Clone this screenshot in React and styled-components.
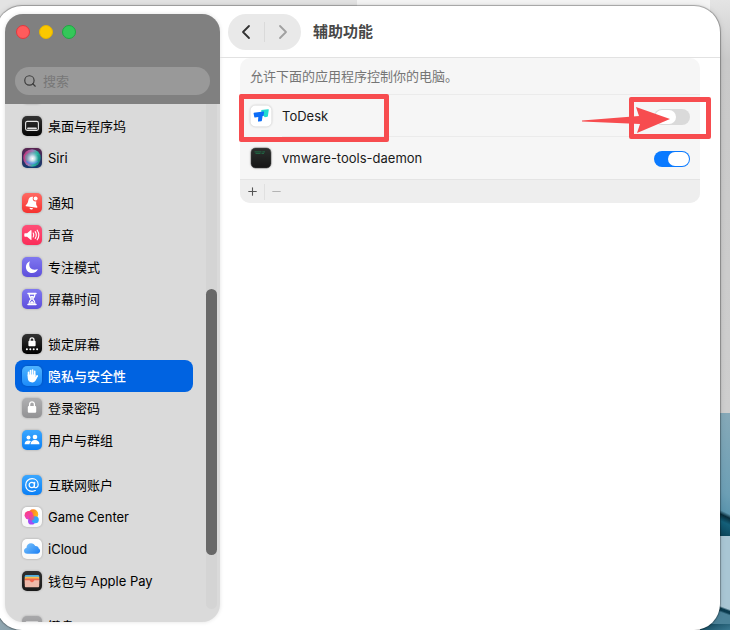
import React, { useState } from 'react'
import styled, { createGlobalStyle } from 'styled-components'
import { LuChevronLeft, LuChevronRight, LuSearch, LuPlus, LuMinus } from 'react-icons/lu'

const GlobalStyle = createGlobalStyle`
  * {
    box-sizing: border-box;
  }
  body {
    margin: 0;
    overflow: hidden;
    font-family: Inter, "Noto Sans CJK SC", sans-serif;
    font-size: 13px;
    line-height: 20px;
    color: #1a1a1a;
  }
  button, input {
    font: inherit;
    margin: 0;
  }
`

function Tile({ id, from, to, children }) {
  return (
    <IconSvg viewBox="0 0 20 20" aria-hidden="true">
      <defs>
        <linearGradient id={id} x1="0" y1="0" x2="0" y2="1">
          <stop offset="0" stopColor={from} />
          <stop offset="1" stopColor={to} />
        </linearGradient>
      </defs>
      <rect width="20" height="20" rx="5" fill={`url(#${id})`} />
      {children}
    </IconSvg>
  )
}

const ControlIcon = () => (
  <Tile id="control" from="#a8a8aa" to="#8e8e90">
    <rect x="4" y="5" width="12" height="4" rx="2" fill="none" stroke="#fff" />
    <rect x="4" y="11" width="12" height="4" rx="2" fill="#fff" />
  </Tile>
)

const DockIcon = () => (
  <Tile id="dock" from="#333" to="#050505">
    <rect x="3.6" y="5.4" width="12.8" height="9" rx="1.6" fill="none" stroke="#e4e4e4" strokeWidth="1.1" />
    <rect x="5.200" y="11.600" width="9.600" height="1.700" rx="0.6" fill="#e4e4e4" />
  </Tile>
)

const SiriIcon = () => (
  <Tile id="siri" from="#5a2450" to="#123a6e">
    <defs>
      <radialGradient id="siriGlow" cx="0.5" cy="0.5" r="0.5">
        <stop offset="0" stopColor="#fff" />
        <stop offset="0.4" stopColor="#dcebf5" stopOpacity="0.85" />
        <stop offset="1" stopColor="#9ac8dc" stopOpacity="0" />
      </radialGradient>
      <linearGradient id="siriBall" x1="0" y1="0.3" x2="1" y2="0.6">
        <stop offset="0" stopColor="#c42d78" />
        <stop offset="0.45" stopColor="#9a80b8" />
        <stop offset="0.7" stopColor="#2bb5a0" />
        <stop offset="1" stopColor="#147c80" />
      </linearGradient>
    </defs>
    <circle cx="10" cy="10" r="8.8" fill="url(#siriBall)" />
    <path d="M3 8c4-5 10-5 14-1-4-1-9 0-11 8-2-2-3-4-3-7z" fill="#3fd0b5" opacity="0.4" />
    <path d="M3.500 13c3 4 9 5 13 0-4 1-8 1-13 0z" fill="#4a7cf0" opacity="0.7" />
    <circle cx="10.500" cy="10.500" r="6.200" fill="url(#siriGlow)" />
  </Tile>
)

const BellIcon = () => (
  <Tile id="bell" from="#ff6a63" to="#f5322f">
    <g transform="rotate(8 10 10)">
      <path d="M10 3.800c-2.700 0-4 2-4 4.300 0 2.500-.7 3.600-1.700 4.700-.5.600-.2 1.300.5 1.300h10.400c.7 0 1-.7.500-1.300C14.700 11.700 14 10.600 14 8.100c0-2.300-1.300-4.300-4-4.300z" fill="#fff" />
      <path d="M8.200 15h3.600c-.2 1-.9 1.500-1.800 1.500S8.400 16 8.200 15z" fill="#fff" />
    </g>
    <circle cx="13.600" cy="5.600" r="2.900" fill="#fb5750" />
    <circle cx="13.600" cy="5.600" r="2" fill="#fff" />
  </Tile>
)

const SoundIcon = () => (
  <Tile id="sound" from="#ff4f78" to="#fb2d58">
    <path d="M3 8.200h2.100l3.500-3c.4-.3.900-.1.900.4v8.800c0 .5-.5.700-.9.400l-3.500-3H3c-.4 0-.7-.3-.7-.7V8.900c0-.4.300-.7.700-.7z" fill="#fff" />
    <path d="M11.200 8c.7 1.200.7 2.800 0 4M13.200 6.600c1.300 2 1.300 4.800 0 6.800M15.200 5.200c1.900 2.800 1.900 6.800 0 9.600" fill="none" stroke="#fff" strokeWidth="1.100" strokeLinecap="round" />
  </Tile>
)

const MoonIcon = () => (
  <Tile id="moon" from="#8078f0" to="#5d4fdc">
    <path d="M8 4.300c-2.600 1-4.100 3.200-4.100 5.800 0 3.400 2.700 6 6.100 6 2.700 0 5-1.600 5.900-4.100-3.200 1.200-6.100.7-7.700-1.300C6.900 9 6.900 6.700 8 4.300z" fill="#fff" />
  </Tile>
)

const HourglassIcon = () => (
  <Tile id="hourglass" from="#8078f0" to="#5d4fdc">
    <path d="M6 4.400h8M6 15.600h8" stroke="#fff" strokeWidth="1.500" strokeLinecap="round" />
    <path d="M7 5c0 2.500.8 3.600 2.300 5C7.800 11.400 7 12.500 7 15h6c0-2.500-.8-3.600-2.300-5C12.200 8.600 13 7.500 13 5z" fill="none" stroke="#fff" strokeWidth="1.200" />
    <path d="M8 7h4l-2 2.600zM7.800 14.600c.3-1.400 1.200-2 2.200-2.600 1 .6 1.900 1.200 2.200 2.600z" fill="#fff" />
  </Tile>
)

const LockScreenIcon = () => (
  <Tile id="lockScreen" from="#333" to="#000">
    <path d="M8 7.400V5.900c0-2.800 4-2.800 4 0v1.500" fill="none" stroke="#fff" strokeWidth="1.300" />
    <rect x="6.400" y="6.800" width="7.200" height="5.400" rx="1" fill="#fff" />
    <g fill="#fff">
      <circle cx="4.900" cy="15.200" r="1" />
      <circle cx="8.300" cy="15.200" r="1" />
      <circle cx="11.700" cy="15.200" r="1" />
      <circle cx="15.100" cy="15.200" r="1" />
    </g>
  </Tile>
)

const HandIcon = () => (
  <Tile id="hand" from="#4db3ff" to="#1c8bfa">
    <g fill="none" stroke="#fff" strokeWidth="1.600" strokeLinecap="round">
      <path d="M6.500 10V6.200M8.500 9V4.500M10.600 9V4M12.700 9.500V5.200M13.200 12.600l2-2.800" />
    </g>
    <path d="M5.700 8.500h7.800v2.600l1.400-1.600 1 .8-2 3.700c-.7 1.500-1.900 2.400-3.600 2.400-2.800 0-4.600-1.700-4.600-4.600z" fill="#fff" />
  </Tile>
)

const PadlockIcon = () => (
  <Tile id="padlock" from="#b0b0b2" to="#929294">
    <path d="M7.600 9V6.400c0-3.300 4.800-3.300 4.800 0V9" fill="none" stroke="#fff" strokeWidth="1.300" />
    <rect x="5.800" y="8" width="8.400" height="6.800" rx="1.100" fill="#fff" />
  </Tile>
)

const PeopleIcon = () => (
  <Tile id="people" from="#3ba7ff" to="#0a7ff5">
    <g fill="#fff">
      <circle cx="6.500" cy="7.400" r="2" />
      <path d="M2.600 14.300c0-2.300 1.500-3.900 3.900-3.900 1 0 1.900.3 2.500.8-1 .9-1.500 2-1.500 3.100z" />
      <circle cx="13" cy="7" r="2.300" />
      <path d="M8.500 14.300c0-2.600 1.800-4.200 4.500-4.200s4.500 1.600 4.500 4.200z" />
    </g>
  </Tile>
)

const AtIcon = () => (
  <Tile id="at" from="#3ba7ff" to="#0a7ff5">
    <g fill="none" stroke="#fff" strokeWidth="1.200" strokeLinecap="round">
      <circle cx="9.800" cy="10" r="2.700" />
      <path d="M12.700 7.300l-.4 4c-.1 2.300 3.900 1.900 3.900-1.600 0-3.600-2.600-6-6.100-6-3.700 0-6.400 2.700-6.400 6.400 0 3.600 2.600 6.200 6.400 6.200 1.200 0 2.300-.2 3.200-.7" />
    </g>
  </Tile>
)

const GameIcon = () => (
  <Tile id="game" from="#fff" to="#f6f6f6">
    <defs>
      <linearGradient id="gameWarm" x1="0" y1="0" x2="1" y2="0.300">
        <stop offset="0" stopColor="#ff5a4d" />
        <stop offset="0.500" stopColor="#ff8a1f" />
        <stop offset="1" stopColor="#ffb61a" />
      </linearGradient>
      <linearGradient id="gamePink" x1="0" y1="0" x2="0.600" y2="1">
        <stop offset="0" stopColor="#ff3f6e" />
        <stop offset="1" stopColor="#e83fd0" />
      </linearGradient>
    </defs>
    <circle cx="11.200" cy="7.200" r="5" fill="url(#gameWarm)" />
    <circle cx="6.800" cy="8.200" r="4.200" fill="url(#gamePink)" />
    <circle cx="9.600" cy="14" r="3.600" fill="#a24bf5" />
    <circle cx="13.300" cy="12.800" r="3.500" fill="#32a6fb" />
    <circle cx="9.600" cy="10.400" r="2.800" fill="#f34a7a" opacity="0.700" />
  </Tile>
)

const CloudIcon = () => (
  <Tile id="cloudTile" from="#fff" to="#f7f7f7">
    <defs>
      <linearGradient id="cloud" x1="0" y1="0" x2="1" y2="0.800">
        <stop offset="0" stopColor="#7cc4fb" />
        <stop offset="1" stopColor="#2485f5" />
      </linearGradient>
    </defs>
    <path d="M5.300 14.800c-2 0-3.300-1.300-3.300-3 0-1.500 1-2.600 2.400-2.900C4.600 6.200 6.500 4.200 9 4.200c1.900 0 3.500 1.200 4.300 2.900 2.100-.2 3.300 1 3.400 2.500.9.400 1.400 1.200 1.400 2.200 0 1.600-1.200 3-3 3z" fill="url(#cloud)" />
  </Tile>
)

const WalletIcon = () => (
  <Tile id="wallet" from="#303030" to="#191919">
    <rect x="2.800" y="4" width="14.400" height="5" rx="1.300" fill="#4caee3" />
    <rect x="2.800" y="5.700" width="14.400" height="5" rx="1" fill="#f7bd4a" />
    <rect x="2.800" y="7.400" width="14.400" height="6" rx="1" fill="#f0654f" />
    <path d="M2.800 9.200h4.500c.9 0 .9 2 2.700 2s1.800-2 2.700-2h4.500V15c0 .8-.5 1.300-1.300 1.300H4.100c-.8 0-1.300-.5-1.300-1.300z" fill="#eeb9a9" />
  </Tile>
)

const KeyboardIcon = () => (
  <Tile id="keyboard" from="#a8a8aa" to="#8e8e90">
    <rect x="3" y="5.500" width="14" height="9" rx="1.500" fill="#fff" />
  </Tile>
)

const ToDeskIcon = () => (
  <IconSvg $size={22} viewBox="0 0 22 22" aria-hidden="true">
    <rect x="0.500" y="0.500" width="21" height="21" rx="5" fill="#fff" />
    <path d="M11.300 5.100l6.800-.9c.5-.1.700.1.700.6l-.9 6.200c-.1.400-.2.600-.6.700l-2.500.5-3.500-3.600z" fill="#1fdbd0" />
    <path d="M3.700 7.800l9.800-1.300c.5-.1.700.1.600.6l-.5 3.300c-.1.400-.3.500-.6.600l-.4.100-.7 4.500c-.1.400-.3.500-.6.600l-2.700.4c-.4.100-.6-.1-.6-.5l.3-4-3.300.4c-.4 0-.6-.1-.7-.5l-.7-3.600c-.1-.3.100-.5.400-.6z" fill="#0b6cf7" />
  </IconSvg>
)

const DaemonIcon = () => (
  <IconSvg $size={22} viewBox="0 0 22 22" aria-hidden="true">
    <defs>
      <linearGradient id="daemon" x1="0" y1="0" x2="0" y2="1">
        <stop offset="0" stopColor="#2c302e" />
        <stop offset="1" stopColor="#151515" />
      </linearGradient>
    </defs>
    <rect x="1" y="1" width="20" height="20" rx="4.500" fill="url(#daemon)" stroke="#4a4a4a" strokeWidth="0.500" />
    <path d="M4.500 4.900h7M12.300 4.900H15M5.500 6.400h5M11.500 6.400h2.500" stroke="#1f7a4c" strokeWidth="0.800" />
  </IconSvg>
)

const groups = [
  [
    { name: '桌面与程序坞', icon: <DockIcon /> },
    { name: 'Siri', icon: <SiriIcon /> },
  ],
  [
    { name: '通知', icon: <BellIcon /> },
    { name: '声音', icon: <SoundIcon /> },
    { name: '专注模式', icon: <MoonIcon /> },
    { name: '屏幕时间', icon: <HourglassIcon /> },
  ],
  [
    { name: '锁定屏幕', icon: <LockScreenIcon /> },
    { name: '隐私与安全性', icon: <HandIcon />, active: true },
    { name: '登录密码', icon: <PadlockIcon /> },
    { name: '用户与群组', icon: <PeopleIcon /> },
  ],
  [
    { name: '互联网账户', icon: <AtIcon /> },
    { name: 'Game Center', icon: <GameIcon /> },
    { name: 'iCloud', icon: <CloudIcon /> },
    { name: '钱包与 Apple Pay', icon: <WalletIcon /> },
  ],
  [{ name: '键盘', icon: <KeyboardIcon /> }],
]

function Sidebar() {
  return (
    <SidebarPanel>
      <SidebarHeader>
        <Lights>
          <Light $color="#ff5b5c" $edge="#e0383e" aria-label="关闭" />
          <Light $color="#fac800" $edge="#e5b400" aria-label="最小化" />
          <Light $color="#34c759" $edge="#1fa743" aria-label="缩放" />
        </Lights>
        <SearchBox>
          <LuSearch size={14} strokeWidth={2} />
          <SearchInput type="search" placeholder="搜索" aria-label="搜索" />
        </SearchBox>
      </SidebarHeader>
      <SidebarBody>
        <Nav>
          {/* scrolled so that only the foot of this row shows */}
          <ScrolledItem href="#" aria-label="控制中心">
            <ControlIcon />
          </ScrolledItem>
          {groups.map((items) => (
            <NavGroup key={items[0].name}>
              {items.map((item) => (
                <NavItem key={item.name} href="#" $active={item.active}>
                  {item.icon}
                  {item.name}
                </NavItem>
              ))}
            </NavGroup>
          ))}
        </Nav>
        <Track>
          <Thumb />
        </Track>
      </SidebarBody>
    </SidebarPanel>
  )
}

function AppRow({ id, icon, name, defaultOn, children }) {
  const [on, setOn] = useState(defaultOn)

  return (
    <Row>
      {icon}
      <RowBody>
        <label htmlFor={id}>{name}</label>
        <Switch id={id} type="checkbox" checked={on} onChange={() => setOn(!on)} />
      </RowBody>
      {children}
    </Row>
  )
}

function App() {
  return (
    <>
      <GlobalStyle />
      <Desktop>
        <Window>
          <Sidebar />
          <Content>
            <Toolbar>
              <NavButtons>
                <NavButton aria-label="后退">
                  <LuChevronLeft size={24} strokeWidth={1.8} />
                </NavButton>
                <NavButton aria-label="前进" disabled>
                  <LuChevronRight size={24} strokeWidth={1.8} />
                </NavButton>
              </NavButtons>
              <Title>辅助功能</Title>
            </Toolbar>
            <Card>
              <Note>允许下面的应用程序控制你的电脑。</Note>
              <AppRow id="todesk" icon={<ToDeskIcon />} name="ToDesk" defaultOn={false}>
                <NameMark />
                <SwitchMark />
                <Arrow viewBox="0 0 88 26" aria-hidden="true">
                  <path d="M0 13.500 57 9 54 0 88 12 55 26 58 17 0 14.500z" fill="#f74c4f" />
                </Arrow>
              </AppRow>
              <AppRow id="vmware" icon={<DaemonIcon />} name="vmware-tools-daemon" defaultOn />
              <CardFooter>
                <FooterButton aria-label="添加">
                  <LuPlus size={13} />
                </FooterButton>
                <FooterButton aria-label="移除" disabled>
                  <LuMinus size={13} />
                </FooterButton>
              </CardFooter>
            </Card>
          </Content>
        </Window>
      </Desktop>
    </>
  )
}

export default App

const IconSvg = styled.svg`
  flex: none;
  width: ${({ $size }) => $size || 20}px;
  height: ${({ $size }) => $size || 20}px;
  filter: drop-shadow(0 0 1px rgba(0, 0, 0, 0.25));
`

const Desktop = styled.div`
  display: flex;
  height: 100vh;
  padding: 6px 10px 0 0;
  background:
    linear-gradient(160deg, #0e4358, #3a7890) right bottom / 30px 6px no-repeat,
    linear-gradient(200deg, #a9c6d4 0 70%, #0b3b4e 72% 74%, #4b8298 76%) right bottom / 30px 94px no-repeat,
    linear-gradient(205deg, #86a9b8 0%, #6c9fb5 60%, #5b95ad 74%, #082c3a 77%, #14607a 82%, #063142 100%) right 413px / 30px 123px no-repeat,
    linear-gradient(#e4e4e4, #c9c9c9 60px, #cecece 413px) right top / 20px 413px no-repeat,
    linear-gradient(#a8b8c1, #8fa6b1) left bottom / 40px 40px no-repeat,
    linear-gradient(90deg, #e3e3e3 357px, #f4f4f4 357px);
`

/* the window hangs a little over the left edge of the screen */
const Window = styled.div`
  flex: 1;
  display: flex;
  min-width: 0;
  margin-left: -4px;
  padding: 8px 0 8px 9px;
  border-radius: 26px;
  background: #fff;
  box-shadow: 0 0 1px 1px rgba(0, 0, 0, 0.3), 0 0 6px rgba(0, 0, 0, 0.12);
`

const SidebarPanel = styled.aside`
  flex: none;
  display: flex;
  flex-direction: column;
  width: 215px;
  overflow: hidden;
  border-radius: 18px;
  background: #dadada;
  box-shadow: 0 0 4px rgba(0, 0, 0, 0.12);
`

const SidebarHeader = styled.div`
  flex: none;
  padding: 11px 10px 9px;
  background: #808080;
`

const Lights = styled.div`
  display: flex;
  gap: 9px;
  padding-left: 1px;
  margin-bottom: 28px;
`

const Light = styled.button`
  width: 14px;
  height: 14px;
  padding: 0;
  border: 1px solid ${({ $edge }) => $edge};
  border-radius: 50%;
  background: ${({ $color }) => $color};
`

const SearchBox = styled.div`
  display: flex;
  align-items: center;
  gap: 6px;
  height: 28px;
  padding: 0 8px;
  border-radius: 14px;
  background: #999;
  color: #3c3c3c;
`

const SearchInput = styled.input`
  flex: 1;
  min-width: 0;
  padding: 0;
  border: 0;
  outline: 0;
  background: none;
  &::placeholder {
    color: #777;
  }
`

const SidebarBody = styled.div`
  flex: 1;
  display: flex;
  min-height: 0;
  padding: 0 3px 0 10px;
  gap: 13px;
`

const Nav = styled.nav`
  flex: 1;
  overflow: hidden;
`

const NavGroup = styled.div`
  margin-bottom: 13px;
`

const NavItem = styled.a`
  display: flex;
  align-items: center;
  gap: 6px;
  height: 32px;
  padding: 0 7px;
  border-radius: 8px;
  font-weight: ${({ $active }) => ($active ? 500 : 400)};
  white-space: nowrap;
  text-decoration: none;
  color: ${({ $active }) => ($active ? '#fff' : '#000')};
  background: ${({ $active }) => ($active ? '#0063e1' : 'none')};
`

const ScrolledItem = styled(NavItem)`
  margin-top: -26px;
`

const Track = styled.div`
  flex: none;
  width: 11px;
  margin-bottom: 13px;
  padding-top: 185px;
  border-radius: 0 0 6px 6px;
  background: #d4d4d4;
`

const Thumb = styled.div`
  height: 266px;
  border-radius: 6px;
  background: #686868;
`

const Content = styled.main`
  flex: 1;
  min-width: 0;
`

const Toolbar = styled.header`
  display: flex;
  gap: 12px;
  height: 44px;
  padding-left: 8px;
  border-bottom: 1px solid #e2e2e2;
`

const NavButtons = styled.div`
  display: flex;
  align-items: center;
  width: 73px;
  height: 36px;
  border-radius: 18px;
  background: #e9e9e9;
`

const NavButton = styled.button`
  flex: 1;
  display: flex;
  align-items: center;
  justify-content: center;
  height: 20px;
  padding: 0;
  border: 0;
  background: none;
  color: #333;
  & + & {
    border-left: 1px solid #dadada;
  }
  &:disabled {
    color: #a0a0a0;
  }
`

const Title = styled.h1`
  margin: 0;
  font-size: 15px;
  line-height: 36px;
  font-weight: 700;
  color: #484848;
`

const Card = styled.section`
  margin: 0 20px;
  border-radius: 10px;
  background: #f6f6f6;
`

const Note = styled.p`
  margin: 0;
  padding: 8px 10px;
  border-bottom: 1px solid #ebebeb;
  color: #757575;
`

const Row = styled.div`
  position: relative;
  display: flex;
  align-items: center;
  gap: 10px;
  height: 42px;
  padding-left: 10px;
`

const RowBody = styled.div`
  flex: 1;
  display: flex;
  align-items: center;
  justify-content: space-between;
  height: 100%;
  padding-right: 10px;
  border-bottom: 1px solid #ebebeb;
  ${Row}:nth-last-child(2) & {
    border-bottom-color: transparent;
  }
`

const Switch = styled.input`
  appearance: none;
  display: flex;
  justify-content: ${({ checked }) => (checked ? 'flex-end' : 'flex-start')};
  width: 36px;
  height: 16px;
  margin-top: 3px;
  padding: 1px;
  border-radius: 8px;
  background: ${({ checked }) => (checked ? '#0a7aff' : '#dadada')};
  &::before {
    content: '';
    width: 21px;
    border-radius: 7px;
    background: #fff;
  }
`

const Mark = styled.div`
  position: absolute;
  border: 5px solid #f74c4f;
  border-radius: 2px;
  pointer-events: none;
`

const NameMark = styled(Mark)`
  top: -1px;
  left: -1px;
  width: 150px;
  height: 48px;
`

const SwitchMark = styled(Mark)`
  top: 2px;
  right: -11px;
  width: 82px;
  height: 42px;
`

const Arrow = styled.svg`
  position: absolute;
  top: 12px;
  right: 30px;
  width: 88px;
  height: 26px;
  pointer-events: none;
`

const CardFooter = styled.div`
  display: flex;
  align-items: center;
  height: 24px;
  border-top: 1px solid #e4e4e4;
  border-radius: 0 0 10px 10px;
  background: #eee;
`

const FooterButton = styled.button`
  display: flex;
  align-items: center;
  justify-content: center;
  width: 24px;
  height: 16px;
  padding: 0;
  border: 0;
  background: none;
  color: #555;
  & + & {
    border-left: 1px solid #e0e0e0;
  }
  &:disabled {
    color: #b4b4b4;
  }
`
